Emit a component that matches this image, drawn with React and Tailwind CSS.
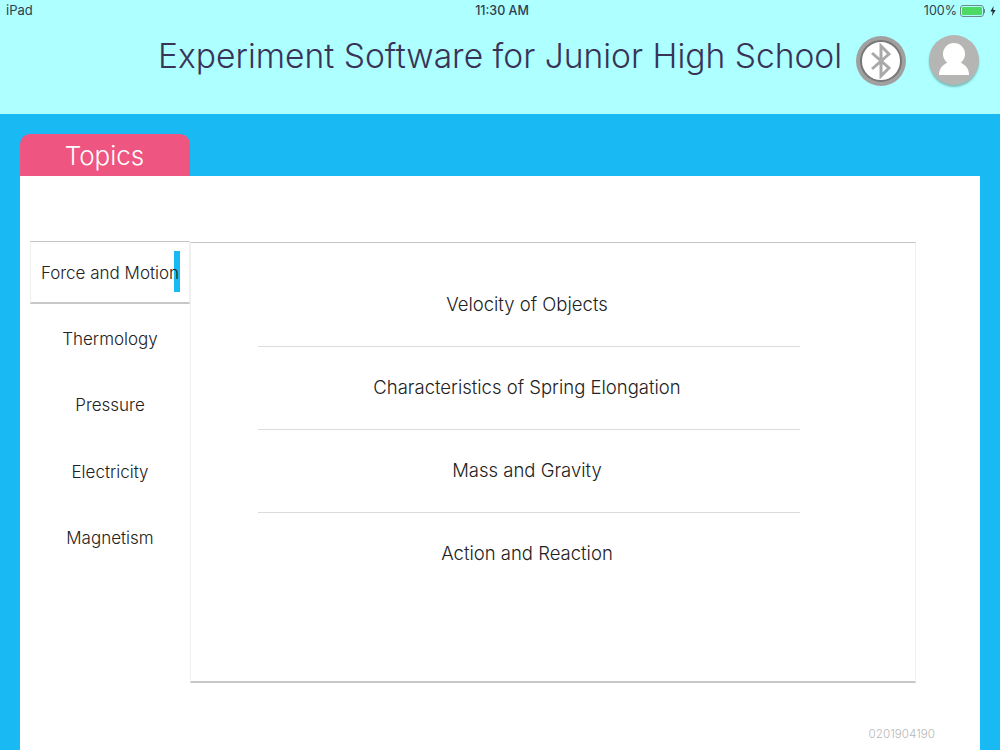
const topics = ['Thermology', 'Pressure', 'Electricity', 'Magnetism'];
const experiments = [
  'Velocity of Objects',
  'Characteristics of Spring Elongation',
  'Mass and Gravity',
  'Action and Reaction',
];

function StatusBar() {
  return (
    <div className="flex items-center justify-between h-[21px] pt-px pl-[6px] pr-[4px] text-[12px] text-[#2c3e50]">
      <span className="w-[200px] text-[13px]">iPad</span>
      <span className="font-medium text-[12.5px] relative left-[1px]">11:30 AM</span>
      <div className="w-[200px] flex items-center justify-end gap-[3px]">
        <span className="text-[12.5px]">100%</span>
        <div className="flex items-center">
          <div className="w-[24px] h-[12px] border border-[#6d8a8a] rounded-[3px] p-px">
            <div className="w-full h-full bg-[#4cd964] rounded-[1px]" />
          </div>
          <div className="w-px h-[4px] bg-[#6d8a8a]" />
        </div>
        <svg width="6" height="10" viewBox="0 0 6 10" className="ml-[2px]">
          <path d="M3.6 0 L0.4 5.6 H2.6 L2 10 L5.6 3.9 H3.2 Z" fill="#1f2d33" />
        </svg>
      </div>
    </div>
  );
}

function BluetoothBadge() {
  return (
    <div className="w-[50px] h-[50px] mt-[2px] rounded-full bg-[#a0a0a0] flex items-center justify-center">
      <div className="w-[42px] h-[42px] rounded-full bg-white border-2 border-[#777] flex items-center justify-center">
        <svg width="20" height="36" viewBox="0 0 20 36" fill="none" stroke="#a9a9a9" strokeWidth="3">
          <path d="M1 10 L18 25 L10 33 V3 L18 11 L1 26" />
        </svg>
      </div>
    </div>
  );
}

function Avatar() {
  return (
    <div className="w-[50px] h-[50px] rounded-full bg-[#b5b5b3] shadow-[0_2px_2px_rgba(60,110,110,0.45)] overflow-hidden flex items-end justify-center">
      <svg width="30" height="33" viewBox="0 0 30 33" fill="white" className="mb-[9px]">
        <circle cx="15" cy="11" r="11" />
        <path d="M0 32 C0 24 5 21 10 19 H20 C25 21 30 24 30 32 Z" />
      </svg>
    </div>
  );
}

export default function App() {
  return (
    <div className="w-[1000px] h-[750px] overflow-hidden flex flex-col bg-[#19b9f3] font-['Inter',sans-serif]">
      <header className="h-[114px] bg-[#aeffff]">
        <StatusBar />
        <div className="flex items-center h-[77px] pl-[158px]">
          <h1 className="text-[33.6px] font-light text-[#3a3358] w-[698px] whitespace-nowrap relative -top-[3px]">
            Experiment Software for Junior High School
          </h1>
          <BluetoothBadge />
          <div className="ml-[23px]"><Avatar /></div>
        </div>
      </header>

      <main className="flex-1 flex flex-col pt-[20px] px-[20px]">
        <div className="w-[170px] h-[42px] bg-[#ee5580] rounded-t-[10px] flex items-center justify-center pr-[1px] text-white text-[26px] font-light">
          Topics
        </div>
        <div className="flex-1 bg-white pt-[66px] pl-[10px] relative">
          <div className="flex items-start">
            <nav className="w-[160px] text-[#222] text-[17px] font-light text-center">
              <div className="h-[63px] pt-[3px] border border-[#f0f0f0] border-t-[#c4c4c4] border-b-2 border-b-[#c8c8c8] flex items-center justify-center relative whitespace-nowrap -top-px">
                <div className="absolute right-[9px] top-[9px] w-[6px] h-[41px] bg-[#19b9f3]" />
                <span className="relative">Force and Motion</span>
              </div>
              <div className="mt-px">
                {topics.map((t) => (
                  <div key={t} className="h-[66.5px] flex items-center justify-center">{t}</div>
                ))}
              </div>
            </nav>
            <section className="w-[726px] h-[441px] border border-[#f0f0f0] border-t-[#c4c4c4] border-b-2 border-b-[#c8c8c8] pt-[21px] pl-[67px] text-[#222] text-[18.5px] font-light">
              {experiments.map((name, i) => (
                <div
                  key={name}
                  className={`w-[542px] h-[83px] flex items-center justify-center ${i < 3 ? 'border-b border-[#dcdcdc]' : 'pb-[2px]'}`}
                >
                  <span className="relative -left-[2px]">{name}</span>
                </div>
              ))}
            </section>
          </div>
          <span className="absolute right-[45px] bottom-[6px] text-[11.7px] font-light text-[#b8b8b8]">0201904190</span>
        </div>
      </main>
    </div>
  );
}
